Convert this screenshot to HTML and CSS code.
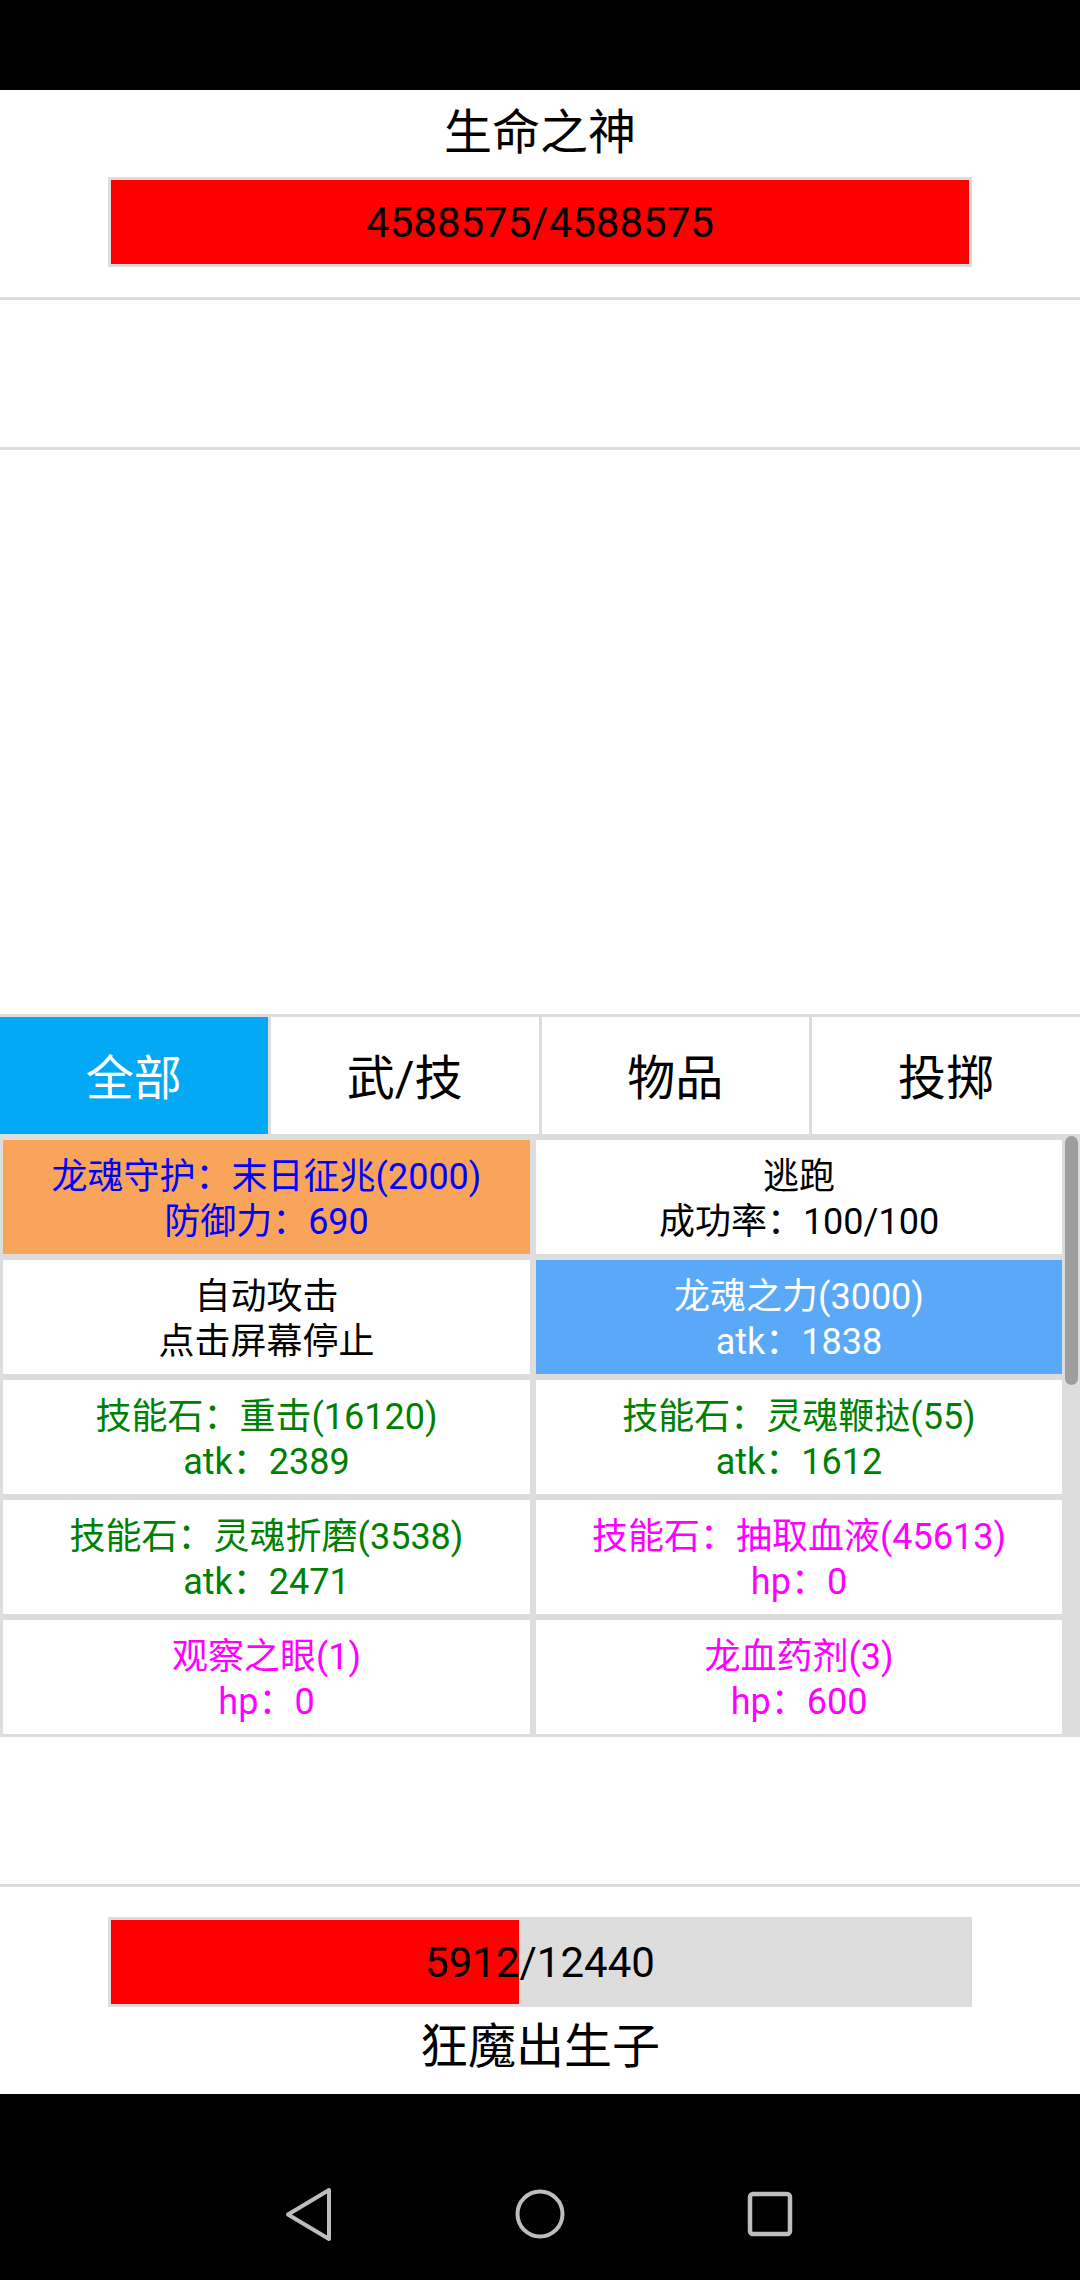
FILE: index.html
```html
<!DOCTYPE html>
<html>
<head>
<meta charset="utf-8">
<title>战斗</title>
<link rel="stylesheet" href="styles.css">
</head>
<body>
<div class="screen">
    <div class="status-bar"></div>

    <div class="unit enemy">
        <div class="unit-name">生命之神</div>
        <div class="hp-bar">
            <div class="hp-fill" style="width:100%"></div>
            <span class="hp-text">4588575/4588575</span>
        </div>
    </div>

    <div class="log"></div>

    <div class="field"></div>

    <div class="tabs">
        <div class="tab active">全部</div>
        <div class="tab">武/技</div>
        <div class="tab">物品</div>
        <div class="tab">投掷</div>
    </div>

    <div class="actions">
        <div class="cell orange blue-text">龙魂守护：末日征兆(2000)<br>防御力：690</div>
        <div class="cell">逃跑<br>成功率：100/100</div>
        <div class="cell">自动攻击<br>点击屏幕停止</div>
        <div class="cell sky white-text">龙魂之力(3000)<br>atk：1838</div>
        <div class="cell green-text">技能石：重击(16120)<br>atk：2389</div>
        <div class="cell green-text">技能石：灵魂鞭挞(55)<br>atk：1612</div>
        <div class="cell green-text">技能石：灵魂折磨(3538)<br>atk：2471</div>
        <div class="cell pink-text">技能石：抽取血液(45613)<br>hp：0</div>
        <div class="cell pink-text">观察之眼(1)<br>hp：0</div>
        <div class="cell pink-text">龙血药剂(3)<br>hp：600</div>
        <div class="scroll-thumb"></div>
    </div>

    <div class="spacer"></div>

    <div class="unit player">
        <div class="hp-bar">
            <div class="hp-fill" style="width:47.52%"></div>
            <span class="hp-text">5912/12440</span>
        </div>
        <div class="unit-name">狂魔出生子</div>
    </div>

    <div class="nav-bar">
        <svg class="nav-icon" viewBox="0 0 60 60">
            <path d="M49 6 L49 55 L8 30.5 Z" fill="none" stroke="#bdbdbd" stroke-width="4" stroke-linejoin="round"/>
        </svg>
        <svg class="nav-icon" viewBox="0 0 60 60">
            <circle cx="30" cy="30" r="22.5" fill="none" stroke="#bdbdbd" stroke-width="4"/>
        </svg>
        <svg class="nav-icon" viewBox="0 0 60 60">
            <rect x="10" y="10" width="40" height="40" rx="3" fill="none" stroke="#bdbdbd" stroke-width="4.5"/>
        </svg>
    </div>
</div>
</body>
</html>
```

FILE: styles.css
```css
body {
    margin: 0;
    background: #000;
    font-family: Roboto, "Noto Sans CJK SC", sans-serif;
}
.screen {
    width: 1080px;
    height: 2280px;
    background: #fff;
    display: flex;
    flex-direction: column;
}
.status-bar {
    height: 90px;
    background: #000;
}

/* hp blocks */
.unit {
    display: flex;
    flex-direction: column;
    align-items: center;
}
.enemy {
    height: 210px;
    padding-top: 11px;
    box-sizing: border-box;
    border-bottom: 3px solid #ddd;
}
.enemy .hp-bar {
    margin-top: 12px;
}
.player {
    height: 207px;
    padding-top: 30px;
    box-sizing: border-box;
}
.player .unit-name {
    margin-top: 8px;
}
.unit-name {
    font-size: 48px;
    line-height: 64px;
    color: #000;
}
.hp-bar {
    position: relative;
    width: 864px;
    height: 90px;
    box-sizing: border-box;
    border: 3px solid #ddd;
    background: #ddd;
    display: flex;
    align-items: center;
    justify-content: center;
}
.hp-fill {
    position: absolute;
    left: 0;
    top: 0;
    bottom: 0;
    background: #ff0000;
}
.hp-text {
    position: relative;
    font-size: 42px;
    color: #000;
}

.log {
    height: 147px;
    border-bottom: 3px solid #ddd;
}
.field {
    height: 564px;
    border-bottom: 3px solid #ddd;
}

/* tabs */
.tabs {
    display: flex;
    gap: 3px;
    height: 117px;
    background: #ddd;
}
.tab {
    flex: 1;
    background: #fff;
    display: flex;
    align-items: center;
    justify-content: center;
    padding-bottom: 4px;
    font-size: 48px;
    color: #000;
}
.tab.active {
    background: #03a9f4;
    color: #fff;
}

/* action grid */
.actions {
    position: relative;
    display: grid;
    grid-template-columns: 527px 526px;
    grid-auto-rows: 114px;
    gap: 6px;
    padding: 6px 18px 3px 3px;
    background: #ddd;
}
.cell {
    background: #fff;
    display: flex;
    align-items: center;
    justify-content: center;
    box-sizing: border-box;
    padding-top: 5px;
    text-align: center;
    font-size: 36px;
    line-height: 45px;
    color: #000;
}
.orange { background: #f9a45b; }
.sky { background: #5aa9f8; }
.blue-text { color: #0000ff; }
.white-text { color: #fff; }
.green-text { color: #008000; }
.pink-text { color: #ff00ff; }
.scroll-thumb {
    position: absolute;
    right: 2px;
    top: 2px;
    width: 13px;
    height: 249px;
    border-radius: 7px;
    background: #9e9e9e;
}

.spacer {
    height: 147px;
    border-bottom: 3px solid #ddd;
}

/* system nav */
.nav-bar {
    flex: 1;
    background: #000;
    display: flex;
    justify-content: center;
    gap: 170px;
    padding-top: 90px;
}
.nav-icon {
    width: 60px;
    height: 60px;
}
```
